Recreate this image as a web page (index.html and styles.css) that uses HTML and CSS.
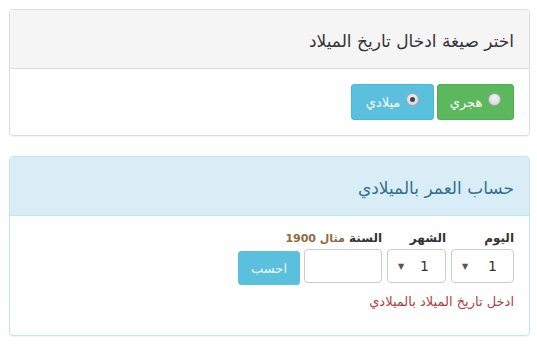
FILE: index.html
```html
<!DOCTYPE html>
<html lang="ar" dir="rtl">
<head>
    <meta charset="UTF-8">
    <title>حساب العمر</title>
    <link rel="stylesheet" href="styles.css">
</head>
<body>
    <div class="container">
        <div class="panel panel-default">
            <div class="panel-heading">اختر صيغة ادخال تاريخ الميلاد</div>
            <div class="panel-body">
                <div class="btn-group">
                    <label class="btn btn-success"><span class="radio"></span>هجري</label>
                    <label class="btn btn-info"><span class="radio checked"></span>ميلادي</label>
                </div>
            </div>
        </div>

        <div class="panel panel-info">
            <div class="panel-heading">حساب العمر بالميلادي</div>
            <div class="panel-body">
                <div class="date-form">
                    <div class="field field-day">
                        <label>اليوم</label>
                        <div class="select"><span>1</span><span class="caret">▼</span></div>
                    </div>
                    <div class="field field-month">
                        <label>الشهر</label>
                        <div class="select"><span>1</span><span class="caret">▼</span></div>
                    </div>
                    <div class="field field-year">
                        <label>السنة <span class="hint">مثال 1900</span></label>
                        <input type="text" class="form-control">
                    </div>
                    <button class="btn btn-calc">احسب</button>
                </div>
                <p class="error">ادخل تاريخ الميلاد بالميلادي</p>
            </div>
        </div>
    </div>
</body>
</html>
```

FILE: styles.css
```css
body {
    margin: 0;
    padding: 0;
    font-family: "DejaVu Sans", sans-serif;
    font-size: 14px;
    color: #333;
    background-color: #fff;
}
.container {
    padding: 9px 7px 0 9px;
}
.panel {
    border: 1px solid #ddd;
    border-radius: 4px;
    margin-bottom: 20px;
    box-shadow: 0 1px 1px rgba(0, 0, 0, 0.05);
}
.panel-heading {
    height: 59px;
    padding: 0 15px;
    display: flex;
    align-items: center;
    padding-top: 4px;
    box-sizing: border-box;
    font-size: 17px;
    border-bottom: 1px solid #ddd;
    border-radius: 3px 3px 0 0;
}
.panel-default .panel-heading {
    background-color: #f5f5f5;
    color: #333;
}
.panel-info {
    border-color: #bce8f1;
}
.panel-info .panel-heading {
    background-color: #d9edf7;
    border-bottom-color: #bce8f1;
    color: #31708f;
}
.panel-body {
    padding: 15px;
}
.btn-group {
    display: flex;
    gap: 3px;
}
.btn {
    display: flex;
    align-items: center;
    justify-content: center;
    height: 36px;
    box-sizing: border-box;
    border: 1px solid transparent;
    border-radius: 3px;
    color: #fff;
    font-family: "DejaVu Sans", sans-serif;
    font-size: 13px;
}
.btn-success {
    width: 77px;
    background-color: #5cb85c;
    border-color: #4cae4c;
}
.btn-info {
    width: 83px;
    background-color: #5bc0de;
    border-color: #46b8da;
}
.radio {
    width: 11px;
    height: 11px;
    margin-left: 6px;
    margin-top: -5px;
    border-radius: 50%;
    border: 1px solid #a8a8a8;
    background: radial-gradient(circle at 50% 35%, #f4f4f4, #cfcfcf);
    position: relative;
}
.radio.checked::after {
    content: "";
    position: absolute;
    left: 3px;
    top: 3px;
    width: 5px;
    height: 5px;
    border-radius: 50%;
    background-color: #444;
}
.date-form {
    display: flex;
    align-items: flex-end;
    gap: 5px;
}
.field label {
    display: block;
    font-weight: bold;
    font-size: 12px;
    margin-bottom: 4px;
    white-space: nowrap;
}
.hint {
    color: #8a6d3b;
    font-size: 11px;
}
.select,
.form-control {
    height: 34px;
    box-sizing: border-box;
    border: 1px solid #ccc;
    border-radius: 4px;
    background-color: #fff;
}
.select {
    display: flex;
    align-items: center;
    justify-content: space-between;
    padding: 0 16px 0 10px;
    font-size: 14px;
}
.caret {
    font-size: 8px;
    color: #555;
}
.field-day .select {
    width: 63px;
}
.field-month .select {
    width: 59px;
}
.field-year {
    width: 78px;
}
.form-control {
    display: block;
    width: 78px;
    margin: 0;
}
.btn-calc {
    width: 62px;
    height: 34px;
    margin-right: -1px;
    margin-bottom: -2px;
    background-color: #5bc0de;
    border-color: #5bc0de;
    color: #eaf7fb;
}
.error {
    margin: 11px 0 11px;
    font-size: 13px;
    color: #a94442;
}
```
